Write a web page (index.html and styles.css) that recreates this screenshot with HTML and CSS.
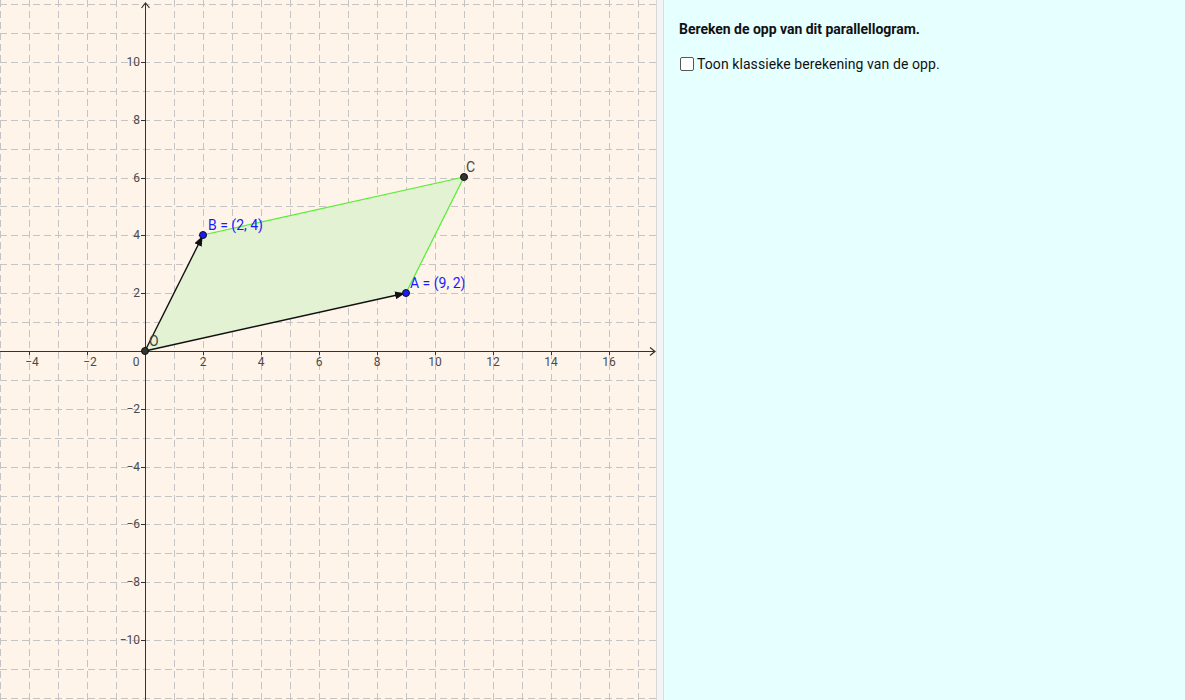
FILE: index.html
```html
<!DOCTYPE html>
<html>
<head>
<meta charset="utf-8">
<link rel="stylesheet" href="styles.css">
</head>
<body>
<div class="app">
  <div class="graphics">
    <svg class="plot" width="656" height="700" viewBox="0 0 656 700" xmlns="http://www.w3.org/2000/svg">
      <defs>
        <marker id="arr" viewBox="0 0 10 8" refX="10" refY="4" markerWidth="10" markerHeight="8" markerUnits="userSpaceOnUse" orient="auto">
          <path d="M0,0 L10,4 L0,8 Z" fill="#111"/>
        </marker>
      </defs>
      <g class="grid">
        <line x1="0.5" y1="0" x2="0.5" y2="700"/>
        <line x1="29.5" y1="0" x2="29.5" y2="700"/>
        <line x1="58.5" y1="0" x2="58.5" y2="700"/>
        <line x1="87.5" y1="0" x2="87.5" y2="700"/>
        <line x1="116.5" y1="0" x2="116.5" y2="700"/>
        <line x1="174.5" y1="0" x2="174.5" y2="700"/>
        <line x1="203.5" y1="0" x2="203.5" y2="700"/>
        <line x1="232.5" y1="0" x2="232.5" y2="700"/>
        <line x1="261.5" y1="0" x2="261.5" y2="700"/>
        <line x1="290.5" y1="0" x2="290.5" y2="700"/>
        <line x1="319.5" y1="0" x2="319.5" y2="700"/>
        <line x1="348.5" y1="0" x2="348.5" y2="700"/>
        <line x1="377.5" y1="0" x2="377.5" y2="700"/>
        <line x1="406.5" y1="0" x2="406.5" y2="700"/>
        <line x1="435.5" y1="0" x2="435.5" y2="700"/>
        <line x1="464.5" y1="0" x2="464.5" y2="700"/>
        <line x1="493.5" y1="0" x2="493.5" y2="700"/>
        <line x1="522.5" y1="0" x2="522.5" y2="700"/>
        <line x1="551.5" y1="0" x2="551.5" y2="700"/>
        <line x1="580.5" y1="0" x2="580.5" y2="700"/>
        <line x1="609.5" y1="0" x2="609.5" y2="700"/>
        <line x1="638.5" y1="0" x2="638.5" y2="700"/>
        <line x1="0" y1="4.5" x2="656" y2="4.5"/>
        <line x1="0" y1="33.5" x2="656" y2="33.5"/>
        <line x1="0" y1="62.5" x2="656" y2="62.5"/>
        <line x1="0" y1="91.5" x2="656" y2="91.5"/>
        <line x1="0" y1="120.5" x2="656" y2="120.5"/>
        <line x1="0" y1="149.5" x2="656" y2="149.5"/>
        <line x1="0" y1="178.5" x2="656" y2="178.5"/>
        <line x1="0" y1="206.5" x2="656" y2="206.5"/>
        <line x1="0" y1="235.5" x2="656" y2="235.5"/>
        <line x1="0" y1="264.5" x2="656" y2="264.5"/>
        <line x1="0" y1="293.5" x2="656" y2="293.5"/>
        <line x1="0" y1="322.5" x2="656" y2="322.5"/>
        <line x1="0" y1="380.5" x2="656" y2="380.5"/>
        <line x1="0" y1="409.5" x2="656" y2="409.5"/>
        <line x1="0" y1="438.5" x2="656" y2="438.5"/>
        <line x1="0" y1="467.5" x2="656" y2="467.5"/>
        <line x1="0" y1="496.5" x2="656" y2="496.5"/>
        <line x1="0" y1="524.5" x2="656" y2="524.5"/>
        <line x1="0" y1="553.5" x2="656" y2="553.5"/>
        <line x1="0" y1="582.5" x2="656" y2="582.5"/>
        <line x1="0" y1="611.5" x2="656" y2="611.5"/>
        <line x1="0" y1="640.5" x2="656" y2="640.5"/>
        <line x1="0" y1="669.5" x2="656" y2="669.5"/>
        <line x1="0" y1="698.5" x2="656" y2="698.5"/>
      </g>

      <polygon class="poly" points="145,351 406,293 464,177 203,235"/>
      <line class="edge" x1="203" y1="235" x2="464" y2="177"/>
      <line class="edge" x1="464" y1="177" x2="406" y2="293"/>

      <g class="axes">
        <line x1="145.5" y1="700" x2="145.5" y2="3"/>
        <polyline points="141.5,8 145.5,3 149.5,8"/>
        <line x1="0" y1="351.5" x2="655" y2="351.5"/>
        <polyline points="650,347.5 655,351.5 650,355.5"/>
        <line x1="29.5" y1="351" x2="29.5" y2="355"/>
        <line x1="87.5" y1="351" x2="87.5" y2="355"/>
        <line x1="203.5" y1="351" x2="203.5" y2="355"/>
        <line x1="261.5" y1="351" x2="261.5" y2="355"/>
        <line x1="319.5" y1="351" x2="319.5" y2="355"/>
        <line x1="377.5" y1="351" x2="377.5" y2="355"/>
        <line x1="435.5" y1="351" x2="435.5" y2="355"/>
        <line x1="493.5" y1="351" x2="493.5" y2="355"/>
        <line x1="551.5" y1="351" x2="551.5" y2="355"/>
        <line x1="609.5" y1="351" x2="609.5" y2="355"/>
        <line x1="141" y1="62.5" x2="145" y2="62.5"/>
        <line x1="141" y1="120.5" x2="145" y2="120.5"/>
        <line x1="141" y1="178.5" x2="145" y2="178.5"/>
        <line x1="141" y1="235.5" x2="145" y2="235.5"/>
        <line x1="141" y1="293.5" x2="145" y2="293.5"/>
        <line x1="141" y1="409.5" x2="145" y2="409.5"/>
        <line x1="141" y1="467.5" x2="145" y2="467.5"/>
        <line x1="141" y1="524.5" x2="145" y2="524.5"/>
        <line x1="141" y1="582.5" x2="145" y2="582.5"/>
        <line x1="141" y1="640.5" x2="145" y2="640.5"/>
      </g>

      <g class="xlab">
        <text x="32" y="366">−4</text>
        <text x="90" y="366">−2</text>
        <text x="136" y="366">0</text>
        <text x="203" y="366">2</text>
        <text x="261" y="366">4</text>
        <text x="319" y="366">6</text>
        <text x="377" y="366">8</text>
        <text x="435" y="366">10</text>
        <text x="493" y="366">12</text>
        <text x="551" y="366">14</text>
        <text x="609" y="366">16</text>
      </g>
      <g class="ylab">
        <text x="140" y="66">10</text>
        <text x="140" y="124">8</text>
        <text x="140" y="182">6</text>
        <text x="140" y="239">4</text>
        <text x="140" y="297">2</text>
        <text x="140" y="413">−2</text>
        <text x="140" y="471">−4</text>
        <text x="140" y="528">−6</text>
        <text x="140" y="586">−8</text>
        <text x="140" y="644">−10</text>
      </g>

      <line class="vec" x1="145" y1="351" x2="405" y2="293.2" marker-end="url(#arr)"/>
      <line class="vec" x1="145" y1="351" x2="202.6" y2="236" marker-end="url(#arr)"/>

      <circle class="pt-dark" cx="145" cy="351" r="3.5"/>
      <circle class="pt-dark" cx="464" cy="177" r="3.5"/>
      <circle class="pt-blue" cx="203" cy="235" r="3.5"/>
      <circle class="pt-blue" cx="406" cy="293" r="3.5"/>

      <text class="lab-dark" x="149" y="346">O</text>
      <text class="lab-dark" x="466" y="172">C</text>
      <text class="lab-blue" x="208" y="230">B = (2, 4)</text>
      <text class="lab-blue" x="410" y="288">A = (9, 2)</text>
    </svg>
  </div>
  <div class="divider"></div>
  <div class="side">
    <h1 class="title">Bereken de opp van dit parallellogram.</h1>
    <label class="check">
      <span class="box"></span>
      <span class="check-text">Toon klassieke berekening van de opp.</span>
    </label>
  </div>
</div>
</body>
</html>
```

FILE: styles.css
```css
html, body {
  margin: 0;
  padding: 0;
  width: 1185px;
  height: 700px;
  overflow: hidden;
  font-family: Roboto, "Liberation Sans", sans-serif;
}

.app {
  display: flex;
  width: 1185px;
  height: 700px;
}

.graphics {
  width: 656px;
  height: 700px;
  background: #fff4ea;
  flex: none;
  overflow: hidden;
}

.plot {
  display: block;
}

.grid line {
  stroke: #c4c4c4;
  stroke-width: 1;
  stroke-dasharray: 7 4;
  shape-rendering: crispEdges;
}

.axes line, .axes polyline {
  stroke: #333;
  stroke-width: 1;
  fill: none;
  shape-rendering: crispEdges;
}

.axes polyline {
  shape-rendering: auto;
  stroke-width: 1.2;
}

.xlab text, .ylab text {
  font-family: Roboto, "Liberation Sans", sans-serif;
  font-size: 12px;
  fill: #4a4a4a;
}

.xlab text {
  text-anchor: middle;
}

.ylab text {
  text-anchor: end;
}

.poly {
  fill: #e2f2d2;
  stroke: none;
}

.edge {
  stroke: #55ee33;
  stroke-width: 1.2;
}

.vec {
  stroke: #111;
  stroke-width: 1.4;
}

.pt-dark {
  fill: #333;
  stroke: #111;
  stroke-width: 1;
}

.pt-blue {
  fill: #1a1aff;
  stroke: #111;
  stroke-width: 1;
}

.lab-dark {
  font-family: Roboto, "Liberation Sans", sans-serif;
  font-size: 14px;
  fill: #444;
}

.lab-blue {
  font-family: Roboto, "Liberation Sans", sans-serif;
  font-size: 14px;
  fill: #1a1aff;
}

.divider {
  flex: none;
  width: 6px;
  height: 700px;
  background: #f4f4f4;
  border-left: 1px solid #d6d6d6;
  border-right: 1px solid #dddddd;
}

.side {
  flex: 1;
  background: #e6ffff;
  padding: 19px 0 0 15px;
}

.title {
  margin: 0;
  font-size: 14px;
  font-weight: bold;
  color: #111;
  line-height: 20px;
  letter-spacing: -0.02px;
}

.check {
  display: flex;
  align-items: center;
  margin-top: 15px;
  gap: 3px;
}

.box {
  width: 12px;
  height: 12px;
  border: 1px solid #555;
  border-radius: 2px;
  background: #fff;
  box-sizing: content-box;
  margin-left: 1px;
}

.check-text {
  font-size: 14px;
  color: #111;
  line-height: 20px;
  letter-spacing: 0.08px;
}
```
